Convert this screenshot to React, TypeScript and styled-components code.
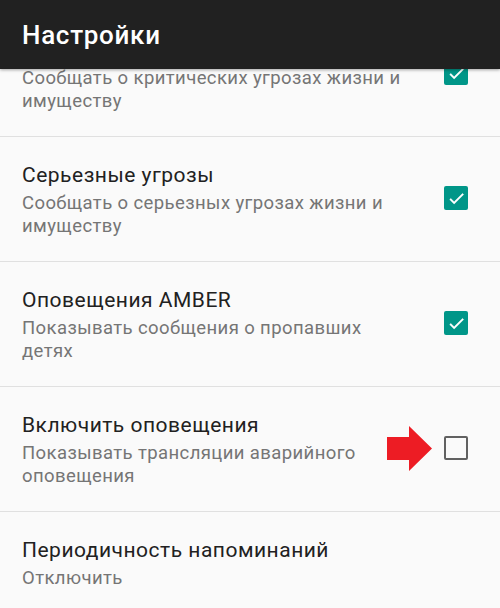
import React from "react";
import styled, { createGlobalStyle } from "styled-components";

const GlobalStyle = createGlobalStyle`
  html, body {
    margin: 0;
    padding: 0;
    background: #fafafa;
    font-family: Roboto, "Noto Sans", "Liberation Sans", sans-serif;
  }
`;

const Screen = styled.div`
  width: 500px;
  height: 608px;
  display: flex;
  flex-direction: column;
  overflow: hidden;
  background: #fafafa;
`;

const Toolbar = styled.header`
  position: relative;
  z-index: 2;
  flex-shrink: 0;
  height: 69px;
  background: #212121;
  display: flex;
  align-items: center;
  padding: 0 22px;
  box-shadow: 0 1px 3px rgba(0, 0, 0, 0.35);
`;

const ToolbarTitle = styled.h1`
  margin: 0;
  color: #ffffff;
  font-size: 26px;
  font-weight: 500;
  letter-spacing: 0.7px;
`;

const Viewport = styled.div`
  flex: 1;
  overflow: hidden;
`;

const List = styled.div`
  display: flex;
  flex-direction: column;
  margin-top: -57px;
`;

const Row = styled.div`
  position: relative;
  height: 125px;
  box-sizing: border-box;
  padding: 25px 22px 0 22px;
  display: flex;
  align-items: flex-start;
  border-bottom: 1px solid #e0e0e0;
`;

const Texts = styled.div`
  flex: 1;
  min-width: 0;
  padding-right: 34px;
`;

const Title = styled.div`
  font-size: 21px;
  line-height: 26px;
  letter-spacing: 0.5px;
  color: #212121;
`;

const Summary = styled.div`
  margin-top: 4px;
  font-size: 18.5px;
  line-height: 23px;
  letter-spacing: 0.4px;
  color: #757575;
`;

const CheckSlot = styled.div`
  width: 24px;
  height: 24px;
  margin-top: 24px;
  margin-right: 10px;
  flex-shrink: 0;
`;

const CheckBox = styled.div<{ $checked: boolean }>`
  width: 24px;
  height: 24px;
  box-sizing: border-box;
  border-radius: 2px;
  display: flex;
  align-items: center;
  justify-content: center;
  background: ${(p) => (p.$checked ? "#009688" : "transparent")};
  border: ${(p) => (p.$checked ? "none" : "2.5px solid #616161")};
`;

const Arrow = styled.svg`
  position: absolute;
  left: 387px;
  top: 39px;
`;

type Item = {
  title: string;
  summary: string;
  checked?: boolean;
  arrow?: boolean;
};

// the first row is scrolled partly under the toolbar
const items: Item[] = [
  {
    title: "Экстремальные угрозы",
    summary: "Сообщать о критических угрозах жизни и имуществу",
    checked: true,
  },
  {
    title: "Серьезные угрозы",
    summary: "Сообщать о серьезных угрозах жизни и имуществу",
    checked: true,
  },
  {
    title: "Оповещения AMBER",
    summary: "Показывать сообщения о пропавших детях",
    checked: true,
  },
  {
    title: "Включить оповещения",
    summary: "Показывать трансляции аварийного оповещения",
    checked: false,
    arrow: true,
  },
  {
    title: "Периодичность напоминаний",
    summary: "Отключить",
  },
];

const Check = ({ checked }: { checked: boolean }) => (
  <CheckBox $checked={checked}>
    {checked && (
      <svg width="19" height="19" viewBox="0 0 24 24">
        <path
          d="M9 16.17L4.83 12l-1.42 1.41L9 19 21 7l-1.41-1.41z"
          fill="#ffffff"
          stroke="#ffffff"
          strokeWidth="0.6"
        />
      </svg>
    )}
  </CheckBox>
);

export default function App() {
  return (
    <Screen>
      <GlobalStyle />
      <Toolbar>
        <ToolbarTitle>Настройки</ToolbarTitle>
      </Toolbar>
      <Viewport>
        <List>
          {items.map((it) => (
            <Row key={it.title}>
              <Texts>
                <Title>{it.title}</Title>
                <Summary>{it.summary}</Summary>
              </Texts>
              {it.checked !== undefined && (
                <CheckSlot>
                  <Check checked={it.checked} />
                </CheckSlot>
              )}
              {it.arrow && (
                <Arrow width="46" height="46" viewBox="0 0 46 46">
                  <polygon
                    points="0,11 22,11 22,0 45,22.5 22,45 22,34 0,34"
                    fill="#ed1c24"
                  />
                </Arrow>
              )}
            </Row>
          ))}
        </List>
      </Viewport>
    </Screen>
  );
}
